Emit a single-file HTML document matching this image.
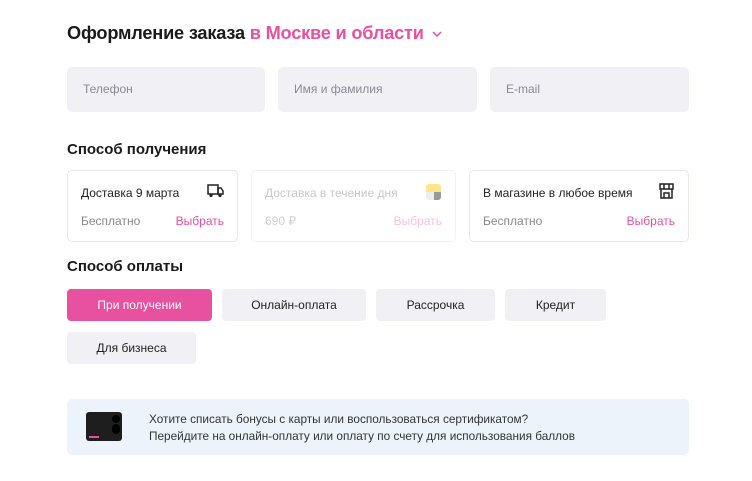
<!DOCTYPE html>
<html><head><meta charset="utf-8"><style>
*{box-sizing:border-box;margin:0;padding:0}
body{width:752px;height:481px;background:#fff;font-family:"Liberation Sans",sans-serif;position:relative;overflow:hidden;color:#222}
.a{position:absolute}
h1{position:absolute;left:67px;top:23px;font-size:18.2px;font-weight:bold;color:#1a1a1a;letter-spacing:-0.2px}
h1 span{color:#e8519f}
.in{position:absolute;top:67px;height:45px;background:#f1f0f5;border-radius:5px;font-size:12px;color:#8a8a96;padding:15px 16px}
h2{position:absolute;left:67px;font-size:15px;font-weight:bold;color:#1a1a1a}
.card{position:absolute;top:170px;height:72px;border:1px solid #e8e8ec;border-radius:5px;font-size:12px}
.card .t{position:absolute;left:13px;top:15px;color:#222}
.card .b{position:absolute;left:13px;top:43px;color:#888}
.card .s{position:absolute;right:13px;top:43px;color:#e8519f}
.btn{position:absolute;height:32px;border-radius:4px;background:#f1f0f5;font-size:12px;color:#222;text-align:center;line-height:32px}
</style></head><body>
<h1>Оформление заказа <span>в Москве и области</span></h1>
<svg class="a" style="left:431px;top:29px" width="12" height="10" viewBox="0 0 12 10"><path d="M2 3l4 4 4-4" stroke="#e8519f" stroke-width="1.5" fill="none"/></svg>
<div class="in" style="left:67px;width:198px">Телефон</div>
<div class="in" style="left:278px;width:199px">Имя и фамилия</div>
<div class="in" style="left:490px;width:199px">E-mail</div>
<h2 style="top:141px">Способ получения</h2>
<div class="card" style="left:67px;width:171px"><div class="t">Доставка 9 марта</div><div class="b">Бесплатно</div><div class="s">Выбрать</div>
<svg class="a" style="left:139px;top:13px" width="17" height="14" viewBox="0 0 17 14"><rect x="1" y="1" width="10" height="9" fill="none" stroke="#222" stroke-width="1.5"/><path d="M11 4h3l2 3v3h-5z" fill="none" stroke="#222" stroke-width="1.5"/><circle cx="4" cy="11.5" r="1.6" fill="#222"/><circle cx="13" cy="11.5" r="1.6" fill="#222"/></svg></div>
<div class="card" style="left:251px;width:205px;border-color:#f2f2f4"><div class="t" style="color:#c8c8cc">Доставка в течение дня</div><div class="b" style="color:#d0d0d4">690 ₽</div><div class="s" style="color:#f7c3dd">Выбрать</div>
<div class="a" style="left:174px;top:13px;width:15px;height:16px;border-radius:3px;overflow:hidden;background:linear-gradient(#ffe48a 50%,#eee 50%)"><div style="position:absolute;left:8px;top:8px;width:7px;height:8px;background:#999"></div></div></div>
<div class="card" style="left:469px;width:220px"><div class="t">В магазине в любое время</div><div class="b">Бесплатно</div><div class="s">Выбрать</div>
<svg class="a" style="left:189px;top:12px" width="15" height="16" viewBox="0 0 15 16"><path d="M1 1h13v5H1zM2 6v9h11V6M5 15v-5h5v5M5 1v5M10 1v5" fill="none" stroke="#222" stroke-width="1.5"/></svg></div>
<h2 style="top:258px">Способ оплаты</h2>
<div class="btn" style="left:67px;top:289px;width:145px;background:#e8519f;color:#fff">При получении</div>
<div class="btn" style="left:222px;top:289px;width:144px">Онлайн-оплата</div>
<div class="btn" style="left:376px;top:289px;width:119px">Рассрочка</div>
<div class="btn" style="left:505px;top:289px;width:101px">Кредит</div>
<div class="btn" style="left:67px;top:332px;width:129px">Для бизнеса</div>
<div class="a" style="left:67px;top:399px;width:622px;height:56px;background:#edf3fb;border-radius:5px"></div>
<div class="a" style="left:86px;top:412px;width:36px;height:29px;background:#1e1e1e;border-radius:3px"><div style="position:absolute;left:26px;top:3px;width:8px;height:8px;border-radius:4px;background:#000"></div><div style="position:absolute;left:26px;top:12px;width:8px;height:10px;border-radius:4px;background:#000"></div><div style="position:absolute;left:3px;top:24px;width:10px;height:2px;background:#e8519f"></div></div>
<div class="a" style="left:149px;top:411px;font-size:11.8px;color:#333;line-height:17px">Хотите списать бонусы с карты или воспользоваться сертификатом?<br>Перейдите на онлайн-оплату или оплату по счету для использования баллов</div>
</body></html>
